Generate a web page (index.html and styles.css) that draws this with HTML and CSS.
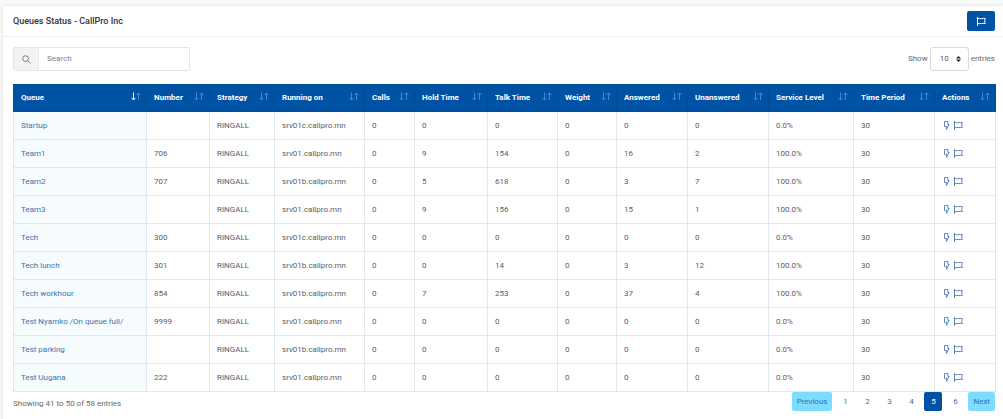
FILE: index.html
```html
<!DOCTYPE html>
<html lang="en">
<head>
<meta charset="utf-8">
<title>Queues Status</title>
<link rel="stylesheet" href="styles.css">
</head>
<body>
<svg class="sprite" aria-hidden="true">
  <symbol id="flag" viewBox="0 0 10 9"><path d="M1.5 0V9M.8 1.5H1.5C3 1.2 3.8 2.1 5.3 1.7S7.8 1.5 9.3 1.5L8.6 4 9.3 6.5C7.5 6.5 7 6.2 5.3 6.5S3 6.4 1.5 6.5"/></symbol>
  <symbol id="bolt" viewBox="0 0 7 9"><path d="M1.5 .6H5L4.8 3.4H6.2L3.4 8.4 3.8 5.4H1.5Z"/></symbol>
  <symbol id="sort" viewBox="0 0 10 9"><path class="down" d="M2.5 .5V8M.5 5.8 2.5 8 4.5 5.8"/><path class="up" d="M7.5 8V1M5.5 3 7.5 .8 9.5 3"/></symbol>
</svg>
<main class="card">
  <header class="card-header">
    <h1 class="title">Queues Status - CallPro Inc</h1>
    <button class="flag-button" type="button" aria-label="Flag"><svg class="icon"><use href="#flag"/></svg></button>
  </header>
  <div class="card-body">
    <div class="toolbar">
      <label class="search">
        <span class="search-icon"><svg class="magnifier" viewBox="0 0 10 10"><circle cx="4" cy="4" r="3.2"/><path d="M6.4 6.4 9.4 9.4"/></svg></span>
        <input class="search-input" type="text" placeholder="Search" aria-label="Search">
      </label>
      <label class="length">Show
        <span class="select-wrap"><select class="select"><option>10</option><option>25</option><option>50</option></select><svg class="caret" viewBox="0 0 5 6"><path d="M0 2.5 2.5 0 5 2.5ZM0 3.5 2.5 6 5 3.5Z"/></svg></span>
        entries</label>
    </div>
    <table class="queues">
      <colgroup><col class="w-queue"><col class="w-number"><col class="w-strategy"><col class="w-running"><col class="w-calls"><col class="w-hold"><col class="w-talk"><col class="w-weight"><col class="w-answered"><col class="w-unanswered"><col class="w-level"><col class="w-period"><col class="w-actions"></colgroup>
      <thead>
        <tr>
          <th class="sorted"><div class="head">Queue<svg class="sort"><use href="#sort"/></svg></div></th>
          <th><div class="head">Number<svg class="sort"><use href="#sort"/></svg></div></th>
          <th><div class="head">Strategy<svg class="sort"><use href="#sort"/></svg></div></th>
          <th><div class="head">Running on<svg class="sort"><use href="#sort"/></svg></div></th>
          <th><div class="head">Calls<svg class="sort"><use href="#sort"/></svg></div></th>
          <th><div class="head">Hold Time<svg class="sort"><use href="#sort"/></svg></div></th>
          <th><div class="head">Talk Time<svg class="sort"><use href="#sort"/></svg></div></th>
          <th><div class="head">Weight<svg class="sort"><use href="#sort"/></svg></div></th>
          <th><div class="head">Answered<svg class="sort"><use href="#sort"/></svg></div></th>
          <th><div class="head">Unanswered<svg class="sort"><use href="#sort"/></svg></div></th>
          <th><div class="head">Service Level<svg class="sort"><use href="#sort"/></svg></div></th>
          <th><div class="head">Time Period<svg class="sort"><use href="#sort"/></svg></div></th>
          <th><div class="head">Actions<svg class="sort"><use href="#sort"/></svg></div></th>
        </tr>
      </thead>
      <tbody>
        <tr><td><a href="#">Startup</a></td><td></td><td>RINGALL</td><td>srv01c.callpro.mn</td><td>0</td><td>0</td><td>0</td><td>0</td><td>0</td><td>0</td><td>0.0%</td><td>30</td><td><div class="actions"><a href="#" aria-label="Run"><svg class="bolt"><use href="#bolt"/></svg></a><a href="#" aria-label="Flag"><svg class="icon"><use href="#flag"/></svg></a></div></td></tr>
        <tr><td><a href="#">Team1</a></td><td>706</td><td>RINGALL</td><td>srv01.callpro.mn</td><td>0</td><td>9</td><td>154</td><td>0</td><td>16</td><td>2</td><td>100.0%</td><td>30</td><td><div class="actions"><a href="#" aria-label="Run"><svg class="bolt"><use href="#bolt"/></svg></a><a href="#" aria-label="Flag"><svg class="icon"><use href="#flag"/></svg></a></div></td></tr>
        <tr><td><a href="#">Team2</a></td><td>707</td><td>RINGALL</td><td>srv01b.callpro.mn</td><td>0</td><td>5</td><td>618</td><td>0</td><td>3</td><td>7</td><td>100.0%</td><td>30</td><td><div class="actions"><a href="#" aria-label="Run"><svg class="bolt"><use href="#bolt"/></svg></a><a href="#" aria-label="Flag"><svg class="icon"><use href="#flag"/></svg></a></div></td></tr>
        <tr><td><a href="#">Team3</a></td><td></td><td>RINGALL</td><td>srv01.callpro.mn</td><td>0</td><td>9</td><td>156</td><td>0</td><td>15</td><td>1</td><td>100.0%</td><td>30</td><td><div class="actions"><a href="#" aria-label="Run"><svg class="bolt"><use href="#bolt"/></svg></a><a href="#" aria-label="Flag"><svg class="icon"><use href="#flag"/></svg></a></div></td></tr>
        <tr><td><a href="#">Tech</a></td><td>300</td><td>RINGALL</td><td>srv01c.callpro.mn</td><td>0</td><td>0</td><td>0</td><td>0</td><td>0</td><td>0</td><td>0.0%</td><td>30</td><td><div class="actions"><a href="#" aria-label="Run"><svg class="bolt"><use href="#bolt"/></svg></a><a href="#" aria-label="Flag"><svg class="icon"><use href="#flag"/></svg></a></div></td></tr>
        <tr><td><a href="#">Tech lunch</a></td><td>301</td><td>RINGALL</td><td>srv01b.callpro.mn</td><td>0</td><td>0</td><td>14</td><td>0</td><td>3</td><td>12</td><td>100.0%</td><td>30</td><td><div class="actions"><a href="#" aria-label="Run"><svg class="bolt"><use href="#bolt"/></svg></a><a href="#" aria-label="Flag"><svg class="icon"><use href="#flag"/></svg></a></div></td></tr>
        <tr><td><a href="#">Tech workhour</a></td><td>854</td><td>RINGALL</td><td>srv01b.callpro.mn</td><td>0</td><td>7</td><td>253</td><td>0</td><td>37</td><td>4</td><td>100.0%</td><td>30</td><td><div class="actions"><a href="#" aria-label="Run"><svg class="bolt"><use href="#bolt"/></svg></a><a href="#" aria-label="Flag"><svg class="icon"><use href="#flag"/></svg></a></div></td></tr>
        <tr><td><a href="#">Test Nyamko /On queue full/</a></td><td>9999</td><td>RINGALL</td><td>srv01.callpro.mn</td><td>0</td><td>0</td><td>0</td><td>0</td><td>0</td><td>0</td><td>0.0%</td><td>30</td><td><div class="actions"><a href="#" aria-label="Run"><svg class="bolt"><use href="#bolt"/></svg></a><a href="#" aria-label="Flag"><svg class="icon"><use href="#flag"/></svg></a></div></td></tr>
        <tr><td><a href="#">Test parking</a></td><td></td><td>RINGALL</td><td>srv01b.callpro.mn</td><td>0</td><td>0</td><td>0</td><td>0</td><td>0</td><td>0</td><td>0.0%</td><td>30</td><td><div class="actions"><a href="#" aria-label="Run"><svg class="bolt"><use href="#bolt"/></svg></a><a href="#" aria-label="Flag"><svg class="icon"><use href="#flag"/></svg></a></div></td></tr>
        <tr><td><a href="#">Test Uugana</a></td><td>222</td><td>RINGALL</td><td>srv01.callpro.mn</td><td>0</td><td>0</td><td>0</td><td>0</td><td>0</td><td>0</td><td>0.0%</td><td>30</td><td><div class="actions"><a href="#" aria-label="Run"><svg class="bolt"><use href="#bolt"/></svg></a><a href="#" aria-label="Flag"><svg class="icon"><use href="#flag"/></svg></a></div></td></tr>
      </tbody>
    </table>
    <footer class="table-footer">
      <p class="info">Showing 41 to 50 of 58 entries</p>
      <nav class="pages" aria-label="Pages">
        <a class="page step" href="#">Previous</a>
        <a class="page" href="#">1</a>
        <a class="page" href="#">2</a>
        <a class="page" href="#">3</a>
        <a class="page" href="#">4</a>
        <a class="page current" href="#" aria-current="page">5</a>
        <a class="page" href="#">6</a>
        <a class="page step" href="#">Next</a>
      </nav>
    </footer>
  </div>
</main>
</body>
</html>
```
FILE: styles.css
```css
* { box-sizing: border-box; }
body {
  margin: 0;
  padding: 6px 0 0 3px;
  background: #f8faf9;
  color: #5a6066;
  font: 8px/12px Roboto, sans-serif;
}
a { color: #3d70ae; text-decoration: none; }
svg { display: block; fill: none; stroke: currentColor; }
.sprite { position: absolute; width: 0; height: 0; }
.card {
  min-height: calc(100vh - 6px);
  background: #fff;
  box-shadow: 0 0 3px #d4d8da;
}
.card-header {
  display: flex;
  align-items: center;
  justify-content: space-between;
  padding: 5px 8px 5px 10px;
  border-bottom: 1px solid #eef0f1;
}
.title { margin: 0; color: #333; font-size: 9px; font-weight: 500; line-height: 12px; }
.flag-button {
  display: flex;
  align-items: center;
  justify-content: center;
  width: 28px;
  height: 20px;
  padding: 0;
  border: 0;
  border-radius: 2px;
  background: #0052a5;
  color: #fff;
}
.icon { width: 10px; height: 9px; stroke-width: 1; }
.card-body { padding: 10px 8px 0 10px; }
.toolbar { display: flex; align-items: center; justify-content: space-between; margin-bottom: 13px; }
.search {
  display: flex;
  width: 177px;
  height: 24px;
  border: 1px solid #e4e5e7;
  border-radius: 2px;
  overflow: hidden;
}
.search-icon {
  display: flex;
  align-items: center;
  justify-content: center;
  width: 25px;
  background: #f3f3f3;
  border-right: 1px solid #e9eaeb;
  color: #6b7075;
}
.magnifier { width: 9px; height: 9px; }
.search-input { flex: 1; min-width: 0; padding: 0 8px; border: 0; background: #fff; font: inherit; color: inherit; }
.search-input::placeholder { color: #7b8187; opacity: 1; }
.length { display: flex; align-items: center; gap: 2px; color: #6a6a6a; }
.select-wrap { display: grid; align-items: center; }
.select-wrap > * { grid-area: 1 / 1; }
.select {
  width: 39px;
  height: 24px;
  padding: 0 9px;
  border: 1px solid #d8dadf;
  border-radius: 3px;
  background: #fff;
  appearance: none;
  color: #555b62;
  font: inherit;
}
.caret { width: 5px; height: 6px; margin-right: 8px; justify-self: end; fill: #222; stroke: none; pointer-events: none; }
.queues { width: 100%; table-layout: fixed; border-collapse: collapse; }
.w-queue { width: 133px; }
.w-number { width: 63px; }
.w-strategy { width: 65px; }
.w-running { width: 90px; }
.w-calls { width: 50px; }
.w-hold { width: 73px; }
.w-talk { width: 70px; }
.w-weight { width: 59px; }
.w-answered { width: 71px; }
.w-unanswered { width: 81px; }
.w-level { width: 85px; }
.w-period { width: 81px; }
.w-actions { width: 61px; }
.queues th, .queues td {
  height: 28px;
  padding: 0 0 0 7px;
  border: 1px solid #dfe7f0;
  text-align: left;
  white-space: nowrap;
}
.queues th { height: 27px; padding-right: 5px; border-color: #004c9b; background: #0052a5; color: #fff; font-weight: 700; }
.head { display: flex; align-items: center; justify-content: space-between; }
.sort { width: 10px; height: 9px; margin-bottom: 3px; flex: none; }
.sorted { --down: #fff; }
.down { stroke: var(--down, #4d86c0); }
.up { stroke: #4d86c0; }
.queues td:first-child { background: #f6fcfe; }
.actions { display: flex; align-items: center; gap: 3px; padding-left: 1px; }
.actions a { color: #5b86bd; }
.bolt { width: 7px; height: 9px; }
.table-footer { display: flex; align-items: flex-start; justify-content: space-between; }
.info { margin: 6px 0 0; color: #6a6a6a; }
.pages { display: flex; gap: 4px; }
.page { min-width: 18px; padding: 4px 5px 3px; border-radius: 2px; text-align: center; }
.step { background: #7ddcff; color: #2676a9; }
.current { background: #0052a5; color: #fff; }
```
